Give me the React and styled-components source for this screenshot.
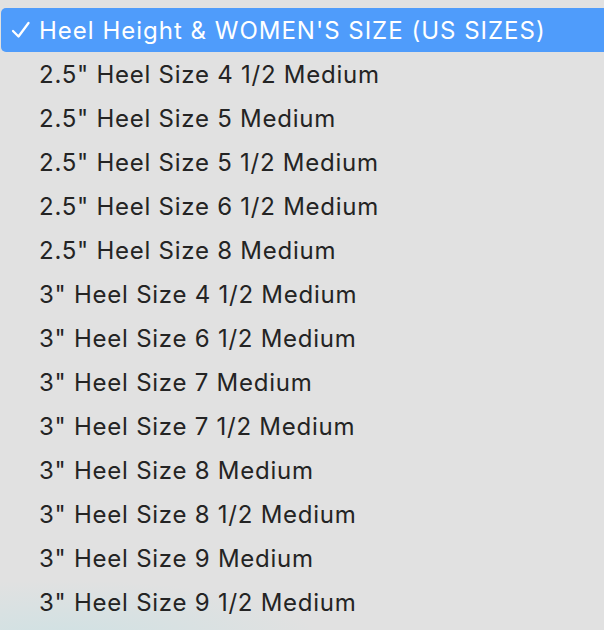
import styled, { createGlobalStyle } from "styled-components";

const Global = createGlobalStyle`
  html, body {
    margin: 0;
    padding: 0;
    background: #e1e1e1;
  }
  body {
    font-family: Inter, "Noto Sans", sans-serif;
  }
`;

const options = [
  '2.5" Heel Size 4 1/2 Medium',
  '2.5" Heel Size 5 Medium',
  '2.5" Heel Size 5 1/2 Medium',
  '2.5" Heel Size 6 1/2 Medium',
  '2.5" Heel Size 8 Medium',
  '3" Heel Size 4 1/2 Medium',
  '3" Heel Size 6 1/2 Medium',
  '3" Heel Size 7 Medium',
  '3" Heel Size 7 1/2 Medium',
  '3" Heel Size 8 Medium',
  '3" Heel Size 8 1/2 Medium',
  '3" Heel Size 9 Medium',
  '3" Heel Size 9 1/2 Medium',
];

const Menu = styled.ul`
  list-style: none;
  margin: 0;
  padding: 8px 0 0 1px;
  height: 630px;
  box-sizing: border-box;
  overflow: hidden;
  background:
    radial-gradient(ellipse 260px 60px at 60px 640px, rgba(200, 225, 228, 0.7), rgba(225, 225, 225, 0) 100%),
    #e1e1e1;
`;

const Item = styled.li`
  display: flex;
  align-items: center;
  height: 44px;
  padding-left: 10px;
  border-radius: 5px 0 0 5px;
  font-size: 24px;
  letter-spacing: ${(p) => (p.selected ? "1px" : "0.75px")};
  color: ${(p) => (p.selected ? "#ffffff" : "#242424")};
  background: ${(p) => (p.selected ? "#4f9cfb" : "transparent")};
  white-space: nowrap;
`;

const Check = styled.span`
  width: 28px;
  flex: none;
  display: flex;
  align-items: center;
`;

const Tick = () => (
  <svg width="20" height="18" viewBox="0 0 20 18">
    <path d="M2 10 L7.5 15.5 L17.5 2" fill="none" stroke="#fff" strokeWidth="2.3" strokeLinecap="round" strokeLinejoin="round" />
  </svg>
);

const App = () => {
  return (
    <>
      <Global />
      <Menu>
        <Item selected>
          <Check><Tick /></Check>
          Heel Height &amp; WOMEN'S SIZE (US SIZES)
        </Item>
        {options.map((o) => (
          <Item key={o}>
            <Check />
            {o}
          </Item>
        ))}
      </Menu>
    </>
  );
};

export default App;
